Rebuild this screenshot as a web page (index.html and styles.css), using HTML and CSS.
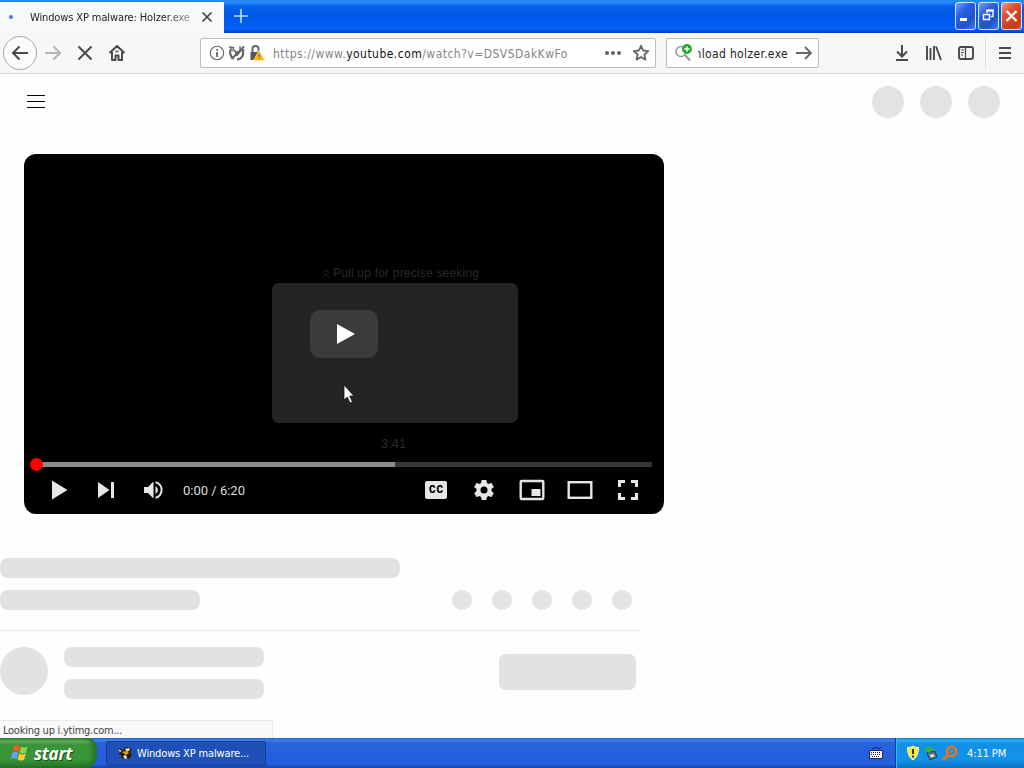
FILE: index.html
```html
<!DOCTYPE html>
<html lang="en">
<head>
    <meta charset="UTF-8">
    <title>Windows XP malware: Holzer.exe</title>
    <link rel="stylesheet" href="styles.css">
</head>
<body>
    <header class="titlebar">
        <div class="tab">
            <span class="tab-loading"></span>
            <span class="tab-title">Windows XP malware: Holzer.exe</span>
            <svg class="tab-close" width="12" height="12" viewBox="0 0 12 12"><path d="M1.5 1.5l9 9M10.5 1.5l-9 9" stroke="#444" stroke-width="1.7"/></svg>
        </div>
        <svg class="new-tab" width="14" height="14" viewBox="0 0 14 14"><path d="M7 0v14M0 7h14" stroke="#b5dcff" stroke-width="1.6"/></svg>
        <div class="window-buttons">
            <span class="win-btn"><svg width="20" height="26" viewBox="0 0 20 26"><path d="M4 16.500h7" stroke="#fff" stroke-width="3"/></svg></span>
            <span class="win-btn"><svg width="20" height="26" viewBox="0 0 20 26" fill="none" stroke="#fff"><path d="M8 10V7.500h6v6H12" stroke-width="1.300"/><path d="M7.500 7.500h7" stroke-width="2"/><path d="M4.500 11.500h6v5h-6z" stroke-width="1.400"/></svg></span>
            <span class="win-btn close"><svg width="20" height="26" viewBox="0 0 20 26"><path d="M4.500 8l10 10M14.500 8l-10 10" stroke="#fff" stroke-width="2.300"/></svg></span>
        </div>
    </header>

    <nav class="toolbar">
        <span class="tool back"><svg width="18" height="18" viewBox="0 0 18 18"><path d="M17 9H2M8.500 2.500L2 9l6.500 6.500"/></svg></span>
        <span class="tool forward"><svg width="18" height="18" viewBox="0 0 18 18"><path d="M1 9h15M9.500 2.500L16 9l-6.500 6.500"/></svg></span>
        <span class="tool"><svg width="16" height="16" viewBox="0 0 16 16"><path d="M1.500 1.500l13 13M14.500 1.500l-13 13"/></svg></span>
        <span class="tool"><svg width="18" height="18" viewBox="0 0 18 18"><path d="M1.500 9L9 2l7.500 7M4 8v8h3.500v-4.500h3V16H14V8" stroke-linejoin="round"/><path d="M7.500 7.500h3" stroke-width="1.500"/></svg></span>

        <div class="urlbar">
            <svg width="16" height="16" viewBox="0 0 16 16"><circle cx="8" cy="8" r="6.700" stroke-width="1.100"/><path d="M8 7v5" stroke-width="1.800"/><path d="M8 4v1.800" stroke-width="1.800"/></svg>
            <svg width="16" height="16" viewBox="0 0 16 16"><path d="M2.500 3.500A6.500 6.500 0 0 0 5 13.500M8 14.500a6.300 6.300 0 0 0 5.500-9" stroke-width="2.200"/><path d="M0 2l4.500.500L4 6.500M15.500 5L11 4.500V1" stroke-width="1.400"/><path d="M5 5l3 2 4-1-4 5z" fill="#666" stroke-width="1"/><path d="M2.500 14L15 1.500" stroke-width="2"/></svg>
            <svg class="lock" width="16" height="16" viewBox="0 0 16 16"><path d="M3.500 8V4a3 3 0 0 1 6 0v3" stroke-width="2"/><path d="M1.500 7h9v8h-9z" fill="#555" stroke="none"/><path d="M10 5.500L16 15.500H4.500z" fill="#fbb714" stroke="#fff3bd" stroke-width=".600"/><path d="M10 9v3M10 13v1" stroke="#79601a" stroke-width="1.200"/></svg>
            <span class="url">https://www.<b>youtube.com</b>/watch?v=DSVSDakKwFo</span>
            <svg class="dots" width="18" height="16" viewBox="0 0 18 16"><g fill="#666" stroke="none"><circle cx="3" cy="8" r="2"/><circle cx="9" cy="8" r="2"/><circle cx="15" cy="8" r="2"/></g></svg>
            <svg width="18" height="18" viewBox="0 0 18 18"><path d="M9 1.800l2.100 4.700 5.200.600-3.900 3.400 1.100 5.100L9 13l-4.500 2.600 1.100-5.100-3.900-3.400 5.200-.600z" stroke-width="1.800" stroke-linejoin="round"/></svg>
        </div>

        <div class="searchbar">
            <svg width="20" height="20" viewBox="0 0 20 20"><circle cx="7" cy="8.500" r="5" stroke="#999" stroke-width="1.600"/><path d="M11 12l5 5.500" stroke="#999" stroke-width="2.200"/><circle cx="13" cy="6" r="4.900" fill="#1dab22" stroke="none"/><path d="M13 3.300v5.400M10.300 6h5.400" stroke="#fff" stroke-width="1.400"/></svg>
            <span class="search-text"><span>download holzer.exe</span></span>
            <svg width="18" height="16" viewBox="0 0 18 16"><path d="M1 8h15M10 2l6 6-6 6" stroke-width="1.800"/></svg>
        </div>

        <div class="toolbar-right">
            <span class="tool"><svg width="16" height="18" viewBox="0 0 16 18"><path d="M8 1v11M3 7.500l5 5 5-5M2 16h12"/></svg></span>
            <span class="tool"><svg width="18" height="18" viewBox="0 0 18 18"><path d="M2 2v14M5.500 4v12M9 2v14M11 2.500L16 16" stroke-width="1.900"/></svg></span>
            <span class="tool"><svg width="18" height="18" viewBox="0 0 18 18"><rect x="2" y="3" width="14" height="12" rx="2" stroke-width="1.900"/><path d="M8.500 3v12" stroke-width="1.300"/><path d="M4 6h3M4 8.500h3M4 11h2" stroke-width="1"/></svg></span>
        </div>
        <span class="tool menu"><svg width="14" height="14" viewBox="0 0 14 14"><path d="M1 2h12M1 7h12M1 12h12" stroke-width="1.800"/></svg></span>
    </nav>

    <main>
        <div class="masthead">
            <svg width="18" height="14" viewBox="0 0 18 14"><path d="M0 .500h18M0 6.500h18M0 12.500h18" stroke="#030303"/></svg>
            <div class="avatars"><i></i><i></i><i></i></div>
        </div>

        <div class="player">
            <div class="seek-hint"><svg width="8" height="9" viewBox="0 0 8 9"><path d="M.500 4L4 1l3.500 3M.500 8L4 5l3.500 3" fill="none" stroke="#292929"/></svg> Pull up for precise seeking</div>
            <div class="preview"></div>
            <div class="preview-time">3:41</div>
            <div class="big-play"><svg width="68" height="48" viewBox="0 0 68 48"><path d="M27 14v20l18-10z" fill="#fff"/></svg></div>
            <svg class="cursor" width="14" height="21" viewBox="0 0 14 21"><path d="M1 1v15l3.300-3 2.700 6 2.400-1-2.700-6H11z" fill="#fff" stroke="#111" stroke-width=".800"/></svg>

            <div class="controls">
                <div class="progress"><div class="loaded"></div><div class="knob"></div></div>
                <div class="buttons">
                    <span><svg width="24" height="24" viewBox="0 0 24 24"><path d="M4 2.500v19L19.500 12z"/></svg></span>
                    <span><svg width="24" height="24" viewBox="0 0 24 24"><path d="M3 4v16l11.500-8zM16 4h3v16h-3z"/></svg></span>
                    <span><svg width="24" height="24" viewBox="0 0 24 24"><path d="M2 9v6h4l5.500 5.500v-17L6 9zM16 12A4.500 4.500 0 0 0 13.500 7.970v8.050A4.500 4.500 0 0 0 16 12zM13.500 3.200v2.060a7 7 0 0 1 0 13.480v2.060a9 9 0 0 0 0-17.600z"/></svg></span>
                    <span class="time">0:00 / 6:20</span>
                    <div class="right-buttons">
                        <span><b class="cc">CC</b></span>
                        <span><svg width="24" height="24" viewBox="0 0 24 24"><path d="M19.430 12.980c.040-.320.070-.640.070-.980s-.030-.660-.070-.980l2.110-1.650c.190-.150.240-.420.120-.640l-2-3.460c-.120-.220-.390-.300-.610-.220l-2.490 1c-.520-.400-1.080-.730-1.690-.980l-.380-2.650A.488.488 0 0 0 14 2h-4c-.250 0-.460.180-.490.420l-.380 2.650c-.610.250-1.170.590-1.690.980l-2.490-1c-.230-.090-.490 0-.610.220l-2 3.460c-.130.220-.070.490.120.640l2.110 1.650c-.040.320-.070.650-.070.980s.030.660.070.980l-2.110 1.650c-.190.150-.240.420-.120.640l2 3.460c.120.220.390.300.610.220l2.490-1c.520.400 1.080.730 1.690.980l.380 2.650c.030.240.240.420.490.420h4c.250 0 .460-.180.490-.420l.380-2.650c.610-.250 1.170-.590 1.690-.980l2.490 1c.230.090.490 0 .610-.220l2-3.460c.120-.220.070-.490-.120-.640l-2.110-1.650zM12 15.500A3.500 3.500 0 1 1 12 8.500a3.500 3.500 0 0 1 0 7z"/></svg></span>
                        <span><svg width="26" height="22" viewBox="0 0 26 22"><rect x="1.700" y="2" width="22.600" height="18" rx="1" class="line"/><path d="M12.500 10h9v7h-9z"/></svg></span>
                        <span><svg width="26" height="22" viewBox="0 0 26 22"><rect x="1.700" y="3.200" width="22.600" height="15.600" class="line"/></svg></span>
                        <span><svg width="24" height="24" viewBox="0 0 24 24"><path d="M3.500 9V3.500H9M15 3.500h5.500V9M20.500 15v5.500H15M9 20.500H3.500V15" class="line thick"/></svg></span>
                    </div>
                </div>
            </div>
        </div>

        <section class="skeleton">
            <div class="bar title"></div>
            <div class="row">
                <div class="bar"></div>
                <div class="actions"><i></i><i></i><i></i><i></i><i></i></div>
            </div>
            <div class="owner">
                <div class="avatar"></div>
                <div class="lines"><div class="bar"></div><div class="bar"></div></div>
                <div class="subscribe"></div>
            </div>
        </section>
        <div class="status">Looking up i.ytimg.com...</div>
    </main>

    <footer class="taskbar">
        <div class="start">
            <svg width="20" height="20" viewBox="0 0 20 20"><path d="M4 3q3-2 6 0L8.500 9q-3-2-6 0z" fill="#ef5b2a"/><path d="M11 3.500q3 1.800 6.500 0L16 9.500q-3 1.800-6.500 0z" fill="#8fd34a"/><path d="M2.200 10q3-2 6 0l-1.500 6q-3-2-6 0z" fill="#6aa2f2"/><path d="M9.200 10.500q3 1.800 6.500 0l-1.500 6q-3 1.800-6.500 0z" fill="#fbd02e"/></svg>
            <span>start</span>
        </div>
        <div class="task">
            <svg width="16" height="16" viewBox="0 0 16 16"><path d="M1 3l5 2 4-3 5 2-2 3 2 3-3 4-3-2-4 2-1-4-3-1 3-2z" fill="#2b1c10"/><path d="M1 4l4 2-2 1zM8 4l4-1 1 2-3 2z" fill="#f1d9a0"/><path d="M5 7l4-1 3 2-3 2z" fill="#e89a28"/><path d="M6 11l3-1 1 3-2 1z" fill="#f4e8cc"/></svg>
            <span>Windows XP malware...</span>
        </div>
        <svg class="keyboard" width="14" height="14" viewBox="0 0 14 14"><path d="M3 3q3-3 5-1t4-1" fill="none" stroke="#102a70"/><path d="M.500 4.500h13v8H.500z" fill="#f4f4f4" stroke="#1b2b55"/><path d="M2 6.500h10M2 8.500h10M3 10.500h8" stroke="#222" stroke-dasharray="1 1"/></svg>
        <div class="tray">
            <svg width="16" height="16" viewBox="0 0 16 16"><path d="M8 1q3 2 5.500 1.500 0 9-5.500 12.500-5.500-3.500-5.500-12.500Q5 3 8 1z" fill="#f8e63b" stroke="#f5f3d0"/><path d="M8 4v5M8 10.500v2" stroke="#222" stroke-width="1.800"/></svg>
            <svg width="16" height="16" viewBox="0 0 16 16"><path d="M4 8l8-2 2 6-7 3z" fill="#5b7484" stroke="#253d50"/><path d="M6.500 10l4-1 1 2.500-3.500 1z" fill="#d8e3e5"/><path d="M1 4l6-3.500V3q5 0 5 4-2-2-5-1v2.500z" fill="#31b53b"/></svg>
            <svg width="18" height="16" viewBox="0 0 18 16" fill="none" stroke="#e27620"><circle cx="10.500" cy="6.500" r="4.700" stroke-width="2.600"/><path d="M7 10l-5 5" stroke-width="3"/><path d="M8.500 8l3.500-3" stroke-width="1.300"/></svg>
            <span>4:11 PM</span>
        </div>
    </footer>
</body>
</html>
```
FILE: styles.css
```css
* {
    box-sizing: border-box;
}

body {
    margin: 0;
    width: 1024px;
    height: 768px;
    overflow: hidden;
    display: flex;
    flex-direction: column;
    background: #fefefe;
    font-family: "DejaVu Sans Condensed", "DejaVu Sans", sans-serif;
    font-size: 11px;
    color: #222;
}

svg {
    display: block;
    flex: none;
}

/* Title bar */
.titlebar {
    height: 33px;
    padding-top: 2px;
    display: flex;
    background: linear-gradient(#1f83f0 0, #2a8cf6 2px, #0862ec 6px, #0057e5 14px, #005df4 24px, #0061f8 29px, #0042b8 33px);
}

.tab {
    width: 224px;
    padding: 0 11px 1px 9px;
    display: flex;
    align-items: center;
    background: #f7f8f9;
}

.tab-loading {
    width: 4px;
    height: 4px;
    margin-right: 17px;
    border-radius: 50%;
    background: #3b83cf;
}

.tab-title {
    width: 161px;
    overflow: hidden;
    white-space: nowrap;
    letter-spacing: -0.12px;
    -webkit-mask-image: linear-gradient(90deg, #000 82%, rgba(0, 0, 0, 0.4));
}

.tab-close {
    margin-left: auto;
}

.new-tab {
    margin: 7px 0 0 10px;
}

.window-buttons {
    display: flex;
    gap: 2px;
    margin-left: auto;
    padding-right: 2px;
}

.win-btn {
    width: 21px;
    height: 28px;
    border: 1px solid #d9e5fb;
    border-radius: 3px;
    background: linear-gradient(135deg, #7c9ff2, #2a5fdc 35%, #2052d0 70%, #3c7cf5);
}

.win-btn.close {
    background: linear-gradient(135deg, #ef9c83, #dd5030 35%, #c83a14 80%, #dd5a35);
}

/* Navigation toolbar */
.toolbar {
    height: 41px;
    padding-left: 4px;
    display: flex;
    align-items: center;
    background: #f7f7f8;
    border-bottom: 1px solid #d9d9da;
}

.toolbar svg {
    fill: none;
    stroke: #494949;
    stroke-width: 2;
}

.tool {
    width: 32px;
    height: 32px;
    display: flex;
    align-items: center;
    justify-content: center;
}

.tool.back {
    width: 34px;
    height: 34px;
    margin-left: -1px;
    border: 1px solid #aaa;
    border-radius: 50%;
    background: #fbfbfb;
}

.tool.forward svg {
    stroke: #b4b4b4;
}

.toolbar .urlbar svg,
.toolbar .searchbar svg {
    stroke: #666;
}

.urlbar,
.searchbar {
    height: 30px;
    display: flex;
    align-items: center;
    background: #fff;
    border: 1px solid #bbb;
    border-radius: 2px;
    font-size: 12px;
}

.urlbar {
    width: 456px;
    margin-left: 67px;
    padding: 0 5px 0 8px;
    gap: 4px;
}

.url {
    margin-left: 4px;
    padding-top: 1px;
    color: #858585;
    white-space: nowrap;
    letter-spacing: 0.47px;
}

.url b {
    font-weight: normal;
    color: #111;
}

.urlbar .dots {
    margin: 0 6px 0 auto;
}

.searchbar {
    width: 153px;
    margin-left: 10px;
    padding: 0 5px 0 7px;
}

/* long queries stay scrolled to their end */
.search-text {
    width: 91px;
    margin: 0 7px 0 4px;
    padding-top: 1px;
    display: flex;
    justify-content: flex-end;
    overflow: hidden;
    white-space: nowrap;
    letter-spacing: 0.35px;
}

.toolbar-right {
    display: flex;
    margin-left: auto;
    padding-right: 3px;
    border-right: 1px solid #ddd;
}

.tool.menu {
    width: 38px;
}

/* Page */
main {
    position: relative;
    height: 664px;
}

.masthead {
    height: 56px;
    padding: 0 24px 0 27px;
    display: flex;
    align-items: center;
    justify-content: space-between;
}

.avatars {
    display: flex;
    gap: 16px;
}

.avatars i {
    width: 32px;
    height: 32px;
    border-radius: 50%;
    background: #e3e3e3;
}

.player {
    position: relative;
    width: 640px;
    height: 360px;
    margin: 24px 0 0 24px;
    padding: 0 12px;
    display: flex;
    flex-direction: column;
    justify-content: flex-end;
    border-radius: 12px;
    background: #000;
    font-family: Roboto, sans-serif;
}

.seek-hint {
    position: absolute;
    top: 112px;
    left: 298px;
    display: flex;
    align-items: center;
    gap: 3px;
    font-family: "Liberation Sans", sans-serif;
    font-size: 12px;
    color: #292929;
    white-space: nowrap;
    letter-spacing: 0.2px;
}

.preview {
    position: absolute;
    top: 129px;
    left: 248px;
    width: 246px;
    height: 140px;
    border-radius: 7px;
    background: #242424;
}

.preview-time {
    position: absolute;
    top: 282px;
    left: 357px;
    font-family: "Liberation Sans", sans-serif;
    font-size: 13px;
    color: #2b2b2b;
}

.big-play {
    position: absolute;
    top: 156px;
    left: 286px;
    border-radius: 10px;
    background: #3b3b3b;
}

.cursor {
    position: absolute;
    top: 230px;
    left: 319px;
}

.progress {
    position: relative;
    height: 5px;
    background: #363636;
}

.loaded {
    width: 359px;
    height: 5px;
    background: #8b8b8b;
}

.knob {
    position: absolute;
    top: -4px;
    left: -6px;
    width: 13px;
    height: 13px;
    border-radius: 50%;
    background: #f00;
}

.buttons {
    height: 47px;
    padding-bottom: 1px;
    display: flex;
    align-items: center;
    fill: #e6e6e6;
}

.buttons span {
    width: 47px;
    display: flex;
    justify-content: center;
}

.buttons .time {
    width: auto;
    margin-left: 6px;
    font-size: 13px;
    color: #ddd;
}

.right-buttons {
    display: flex;
    align-items: center;
    margin-left: auto;
}

.right-buttons span {
    width: 48px;
}

.cc {
    width: 22px;
    height: 18px;
    border-radius: 2px;
    background: #e6e6e6;
    color: #000;
    font-size: 10px;
    font-weight: 900;
    line-height: 18px;
    letter-spacing: 1px;
    text-align: center;
    text-indent: 1px;
}

.line {
    fill: none;
    stroke: #e6e6e6;
    stroke-width: 2.4;
}

.thick {
    stroke-width: 3;
}

/* Placeholders shown while the page loads */
.skeleton {
    width: 640px;
    margin-top: 44px;
}

.bar {
    width: 200px;
    height: 20px;
    border-radius: 8px;
    background: #e2e2e2;
}

.bar.title {
    width: 400px;
}

.row {
    display: flex;
    justify-content: space-between;
    margin-top: 12px;
    padding: 0 8px 20px 0;
    border-bottom: 1px solid #ebebeb;
}

.actions {
    display: flex;
    gap: 20px;
}

.actions i {
    width: 20px;
    height: 20px;
    border-radius: 50%;
    background: #e3e3e3;
}

.owner {
    display: flex;
    align-items: center;
    padding: 16px 4px 0 0;
}

.avatar {
    width: 48px;
    height: 48px;
    margin: -4px 16px 0 0;
    border-radius: 50%;
    background: #e2e2e2;
}

.lines {
    display: flex;
    flex-direction: column;
    gap: 12px;
}

.subscribe {
    width: 137px;
    height: 36px;
    margin: -2px 0 0 auto;
    border-radius: 7px;
    background: #e2e2e2;
}

.status {
    position: absolute;
    left: 0;
    bottom: 0;
    width: 273px;
    height: 18px;
    padding-left: 3px;
    border: solid #e8e8e8;
    border-width: 1px 1px 0 0;
    background: #f9f9f9;
    line-height: 19px;
    letter-spacing: -0.25px;
    color: #444;
}

/* Taskbar */
.taskbar {
    height: 30px;
    display: flex;
    align-items: center;
    background: linear-gradient(#2458c6 0, #3f83ec 2px, #2863dc 5px, #245edb 20px, #2560df 26px, #1941a5 30px);
    color: #fff;
}

.start {
    width: 97px;
    height: 30px;
    padding-left: 10px;
    display: flex;
    align-items: center;
    gap: 4px;
    border-radius: 0 10px 12px 0;
    background: linear-gradient(#2f7b2e 0, #62b262 3px, #3a9339 7px, #389638 22px, #256f25 30px);
    box-shadow: inset -4px 0 5px #256f25;
    font-family: "Open Sans", sans-serif;
    font-size: 17px;
    font-style: italic;
    font-weight: bold;
    letter-spacing: -0.2px;
    text-shadow: 1px 1px 1px #174d17;
}

.task {
    width: 160px;
    height: 25px;
    margin-left: 9px;
    padding-left: 10px;
    display: flex;
    align-items: center;
    gap: 4px;
    border: 1px solid #163f9c;
    border-radius: 2px;
    background: #1f50b8;
    white-space: nowrap;
    letter-spacing: -0.15px;
}

.keyboard {
    margin-left: auto;
}

.tray {
    width: 129px;
    height: 30px;
    margin-left: 12px;
    padding-left: 9px;
    display: flex;
    align-items: center;
    gap: 2px;
    border-left: 1px solid #0c3d9b;
    background: linear-gradient(#0e6fc6 0, #29b0f2 2px, #1290e6 6px, #1292ec 22px, #0d70bd 30px);
    box-shadow: inset 1px 0 #35b8f5;
}

.tray span {
    margin-left: 6px;
    font-size: 11px;
    letter-spacing: -0.1px;
    white-space: nowrap;
}
```
